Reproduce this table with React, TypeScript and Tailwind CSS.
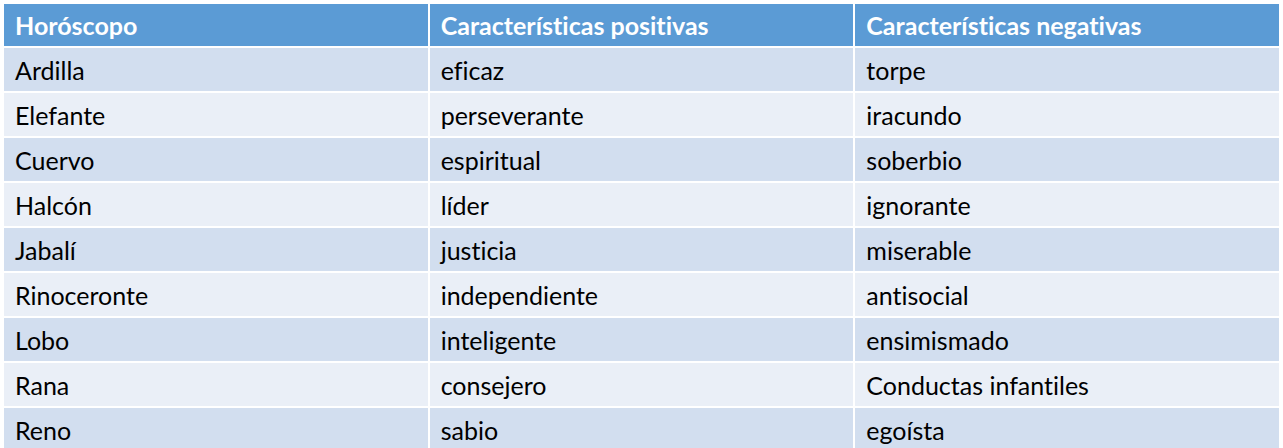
const rows: [string, string, string][] = [
  ["Ardilla", "eficaz", "torpe"],
  ["Elefante", "perseverante", "iracundo"],
  ["Cuervo", "espiritual", "soberbio"],
  ["Halcón", "líder", "ignorante"],
  ["Jabalí", "justicia", "miserable"],
  ["Rinoceronte", "independiente", "antisocial"],
  ["Lobo", "inteligente", "ensimismado"],
  ["Rana", "consejero", "Conductas infantiles"],
  ["Reno", "sabio", "egoísta"],
];

const headers = ["Horóscopo", "Características positivas", "Características negativas"];

export default function App() {
  return (
    <div className="w-[1283px] h-[448px] overflow-hidden bg-white px-[4px] pt-[4px] font-['Lato',sans-serif] [font-variant-ligatures:none]">
      <div className="grid grid-cols-3 gap-[2px]">
        {headers.map((h) => (
          <div key={h} className="h-[42px] bg-[#5b9bd5] pl-[11px] flex items-center text-[25px] font-bold text-white leading-none">
            {h}
          </div>
        ))}
        {rows.map((r, i) =>
          r.map((cell, j) => (
            <div
              key={`${i}-${j}`}
              className={`h-[43px] pl-[11px] pt-[2px] flex items-center text-[25px] text-black leading-none ${
                i % 2 === 0 ? "bg-[#d2deef]" : "bg-[#eaeff7]"
              }`}
            >
              {cell}
            </div>
          ))
        )}
      </div>
    </div>
  );
}
